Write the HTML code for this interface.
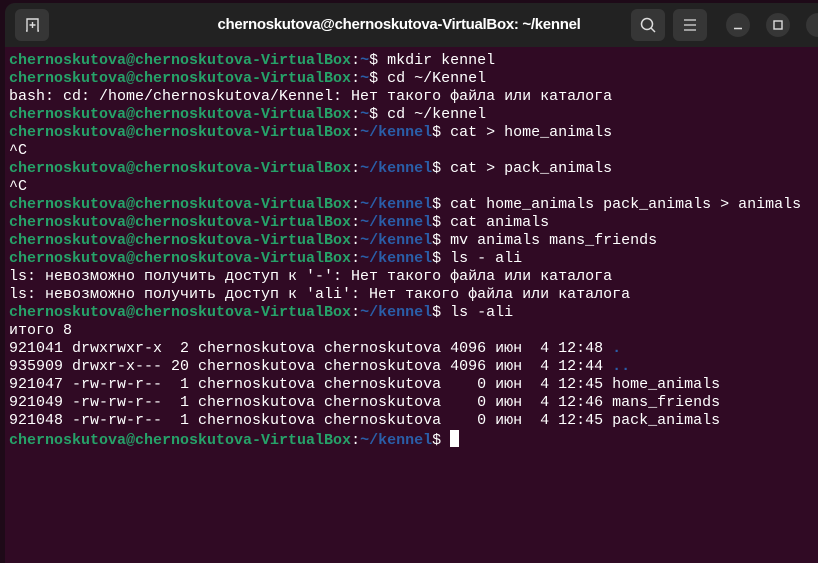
<!DOCTYPE html>
<html><head><meta charset="utf-8"><style>
html,body{margin:0;padding:0;width:818px;height:554px;overflow:hidden;background:#1e0a18;}
.win{position:absolute;left:5px;top:3px;width:830px;height:560px;border-radius:10px 10px 0 0;overflow:hidden;background:#300a24;}
.tb{position:absolute;left:0;top:0;right:0;height:44px;background:#222222;}
.btn{position:absolute;top:6px;width:34px;height:32px;border-radius:6px;background:#363636;}
.circ{position:absolute;top:10px;width:24px;height:24px;border-radius:50%;background:#363636;}
.title{position:absolute;top:0;left:0;width:788px;text-align:center;color:#fff;font:bold 15px "Liberation Sans",sans-serif;line-height:44px;letter-spacing:-0.3px;}
pre{position:absolute;left:4px;top:49px;margin:0;font:15px/18px "Liberation Mono",monospace;color:#fff;}
.g{color:#26a269;font-weight:bold}
.b{color:#2a5ea8;font-weight:bold}
.cur{display:inline-block;width:9px;height:17px;background:#fff;vertical-align:-3px;}
</style></head><body>
<div class="win">
<div class="tb">
<div class="btn" style="left:10px"><svg width="34" height="32"><path d="M11 22 H12 V10 H23 V22 H24" stroke="#ddd" stroke-width="1.4" fill="none"/><path d="M17.5 13 V19 M14.5 16 H20.5" stroke="#ddd" stroke-width="1.4"/></svg></div>
<div class="title">chernoskutova@chernoskutova-VirtualBox: ~/kennel</div>
<div class="btn" style="left:626px"><svg width="34" height="32"><circle cx="16" cy="15" r="5.5" stroke="#ddd" stroke-width="1.5" fill="none"/><path d="M20 19 L24 23" stroke="#ddd" stroke-width="1.5"/></svg></div>
<div class="btn" style="left:668px"><svg width="34" height="32"><path d="M11 11 H23 M11 16 H23 M11 21 H23" stroke="#ddd" stroke-width="1.3"/></svg></div>
<div class="circ" style="left:721px"><svg width="24" height="24"><path d="M8 15.5 H16" stroke="#ddd" stroke-width="1.5"/></svg></div>
<div class="circ" style="left:761px"><svg width="24" height="24"><rect x="8" y="8" width="8" height="8" stroke="#ddd" stroke-width="1.4" fill="none"/></svg></div>
<div class="circ" style="left:801px"></div>
</div>
<pre><span class="g">chernoskutova@chernoskutova-VirtualBox</span>:<span class="b">~</span>$ mkdir kennel
<span class="g">chernoskutova@chernoskutova-VirtualBox</span>:<span class="b">~</span>$ cd ~/Kennel
bash: cd: /home/chernoskutova/Kennel: Нет такого файла или каталога
<span class="g">chernoskutova@chernoskutova-VirtualBox</span>:<span class="b">~</span>$ cd ~/kennel
<span class="g">chernoskutova@chernoskutova-VirtualBox</span>:<span class="b">~/kennel</span>$ cat &gt; home_animals
^C
<span class="g">chernoskutova@chernoskutova-VirtualBox</span>:<span class="b">~/kennel</span>$ cat &gt; pack_animals
^C
<span class="g">chernoskutova@chernoskutova-VirtualBox</span>:<span class="b">~/kennel</span>$ cat home_animals pack_animals &gt; animals
<span class="g">chernoskutova@chernoskutova-VirtualBox</span>:<span class="b">~/kennel</span>$ cat animals
<span class="g">chernoskutova@chernoskutova-VirtualBox</span>:<span class="b">~/kennel</span>$ mv animals mans_friends
<span class="g">chernoskutova@chernoskutova-VirtualBox</span>:<span class="b">~/kennel</span>$ ls - ali
ls: невозможно получить доступ к '-': Нет такого файла или каталога
ls: невозможно получить доступ к 'ali': Нет такого файла или каталога
<span class="g">chernoskutova@chernoskutova-VirtualBox</span>:<span class="b">~/kennel</span>$ ls -ali
итого 8
921041 drwxrwxr-x  2 chernoskutova chernoskutova 4096 июн  4 12:48 <span class="b">.</span>
935909 drwxr-x--- 20 chernoskutova chernoskutova 4096 июн  4 12:44 <span class="b">..</span>
921047 -rw-rw-r--  1 chernoskutova chernoskutova    0 июн  4 12:45 home_animals
921049 -rw-rw-r--  1 chernoskutova chernoskutova    0 июн  4 12:46 mans_friends
921048 -rw-rw-r--  1 chernoskutova chernoskutova    0 июн  4 12:45 pack_animals
<span class="g">chernoskutova@chernoskutova-VirtualBox</span>:<span class="b">~/kennel</span>$ <span class="cur"></span></pre>
</div>
</body></html>
